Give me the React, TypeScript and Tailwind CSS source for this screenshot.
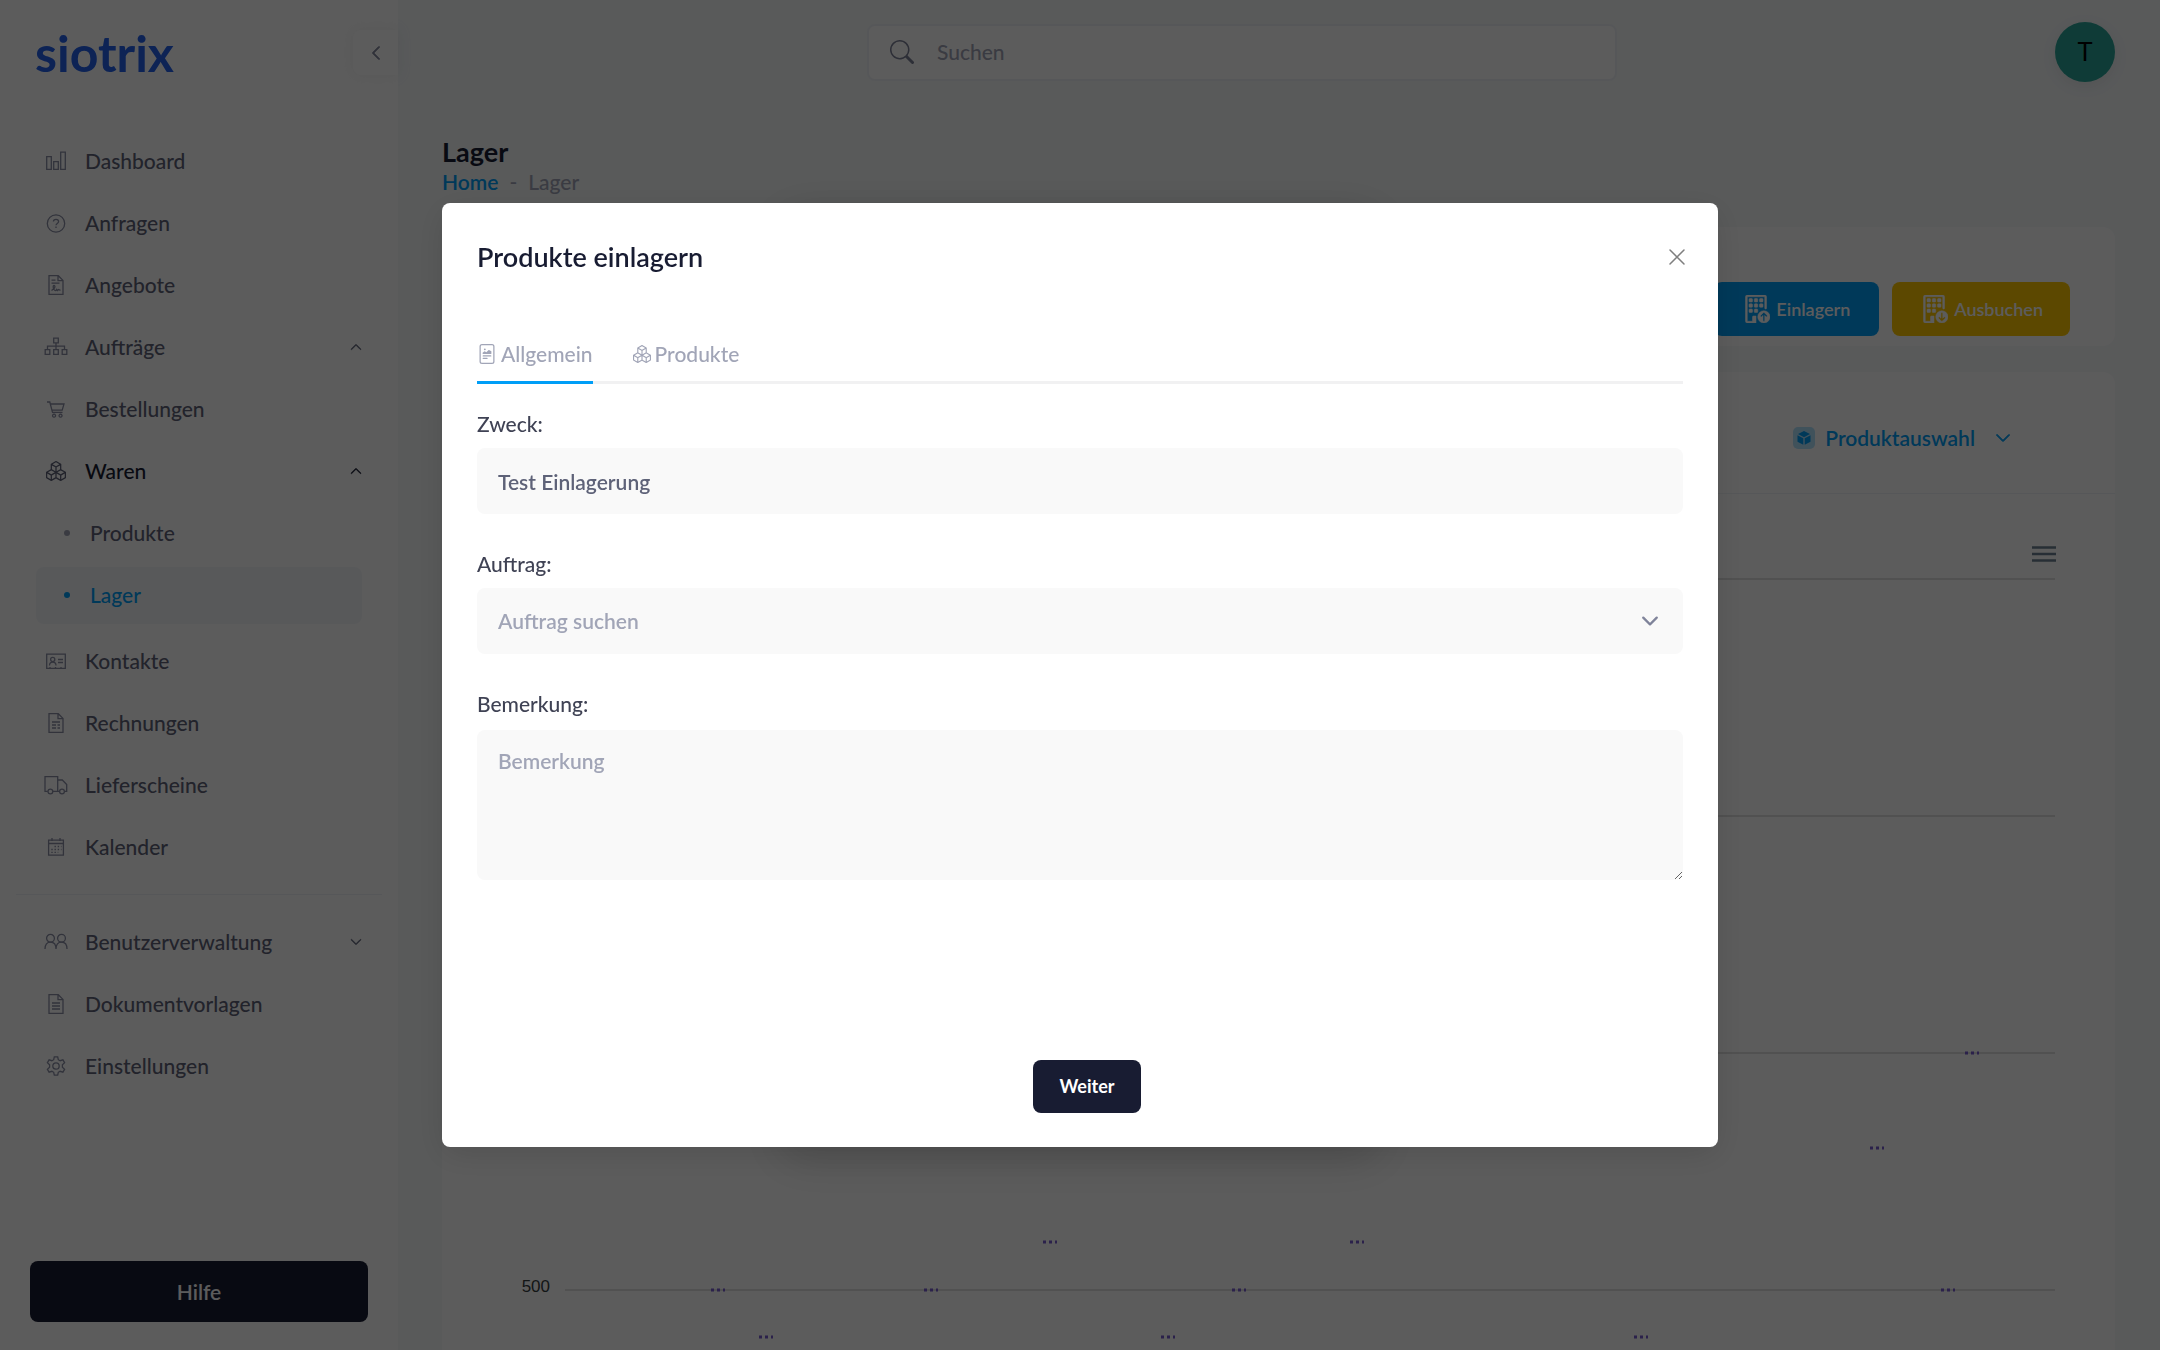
import { useState, type ReactNode } from "react";
import {
  BsBoxes,
  BsBuildingDown,
  BsBuildingUp,
  BsChevronDown,
  BsChevronLeft,
  BsChevronUp,
  BsFileRichtext,
  BsSearch,
} from "react-icons/bs";

function Glyph({ children, className = "w-5" }: { children: ReactNode; className?: string }) {
  return (
    <svg viewBox="0 0 20 20" className={`h-5 ${className}`} fill="none" stroke="currentColor" strokeWidth="1.3" aria-hidden="true">
      {children}
    </svg>
  );
}

const page = <path d="M3 .7h9.3L17 5.4v13.9H3zM12 .7v5h5" />;

const icons = {
  chart: (
    <Glyph>
      <path d="M.7 5.7h4.6v12.6H.7zM7.7 10.7h4.6v7.6H7.7zM14.7 1.2h4.6v17.1h-4.6z" />
    </Glyph>
  ),
  question: (
    <Glyph>
      <circle cx="10" cy="10.5" r="8.7" />
      <path d="M7.4 8.6c0-3 5.2-3 5.2 0 0 1.9-2.6 1.9-2.6 3.7M10 13.5V15" />
    </Glyph>
  ),
  contract: (
    <Glyph>
      {page}
      <path d="M5.5 5.2h4M5.5 8.2h8M5.5 15.5l2-1.5c2-1.5 1.6-3.5.5-3.5s-1 2.5 0 4 2 1.5 2.5 0l1 1 1-1 2 .8" />
    </Glyph>
  ),
  sitemap: (
    <Glyph className="w-6 overflow-visible">
      <path d="M7.7 1.2h4.6v4.6H7.7zM-.8 12.7h4.6v4.6H-.8zM7.7 12.7h4.6v4.6H7.7zM16.2 12.7h4.6v4.6h-4.6zM10 6v6.5M1.5 12.5V9.2h17v3.3" />
    </Glyph>
  ),
  cart: (
    <Glyph>
      <path d="M1 3h2.8l2.7 10.3h10M4.3 5H18l-1.8 6.2H6M8 15.2a1.5 1.5 0 1 0 .1 0zM14.5 15.2a1.5 1.5 0 1 0 .1 0z" />
    </Glyph>
  ),
  boxes: <BsBoxes className="size-5" />,
  card: (
    <Glyph>
      <path d="M.7 3.2h18.6v14.1H.7zM12 8.5h5M12 11.5h5M3.5 14.5c0-4.5 6.5-4.5 6.5 0M4 17v-1M9.5 17v-1M15 17v-1" />
      <circle cx="6.7" cy="8.5" r="2.1" />
    </Glyph>
  ),
  invoice: (
    <Glyph>
      {page}
      <path d="M6 9h8M6 12h4M11.5 12H14M6 15h4M11.5 15H14" />
    </Glyph>
  ),
  truck: (
    <Glyph className="w-6 overflow-visible">
      <path d="M1.8 16.3H-1V1.7h12.7v14.6H7M11.7 5h4.6l4.4 4.6v6.7h-2M13.5 16.3h-1.8" />
      <circle cx="4.4" cy="16.5" r="2.4" />
      <circle cx="16" cy="16.5" r="2.4" />
    </Glyph>
  ),
  calendar: (
    <Glyph>
      <path d="M2.6 3.2h14.8v15H2.6zM2.6 6.5h14.8M6 1v3M14 1v3" />
      <path strokeDasharray="1.4 1.8" d="M8.5 9.5h7M5.3 12.5h10.2M5.3 15.3h7" />
    </Glyph>
  ),
  users: (
    <Glyph className="w-6 overflow-visible">
      <circle cx="4.5" cy="6.3" r="3.9" />
      <circle cx="15.5" cy="6.3" r="3.9" />
      <path d="M-1 17c0-4.500 2-6.8 5.5-6.8S10 12.5 10 17c0-4.5 2-6.8 5.5-6.8S21 12.5 21 17" />
    </Glyph>
  ),
  lines: (
    <Glyph>
      {page}
      <path d="M6 9h8M6 12h8M6 15h8" />
    </Glyph>
  ),
  gear: (
    <Glyph>
      <circle cx="10" cy="10" r="3.2" />
      <path d="M8.3.8h3.4l.6 2.9 1.8 1 2.8-.9 1.7 2.9-2.2 2v2.6l2.2 2-1.7 2.9-2.8-.9-1.8 1-.6 2.9H8.3l-.6-2.9-1.8-1-2.8.9-1.7-2.9 2.2-2V8.7l-2.2-2 1.7-2.9 2.8.9 1.8-1z" />
    </Glyph>
  ),
};

type NavEntry = { label: string; icon: keyof typeof icons; chevron?: "up" | "down"; active?: boolean };

const mainNav: NavEntry[] = [
  { label: "Dashboard", icon: "chart" },
  { label: "Anfragen", icon: "question" },
  { label: "Angebote", icon: "contract" },
  { label: "Aufträge", icon: "sitemap", chevron: "up" },
  { label: "Bestellungen", icon: "cart" },
  { label: "Waren", icon: "boxes", chevron: "up", active: true },
];

const recordNav: NavEntry[] = [
  { label: "Kontakte", icon: "card" },
  { label: "Rechnungen", icon: "invoice" },
  { label: "Lieferscheine", icon: "truck" },
  { label: "Kalender", icon: "calendar" },
];

const adminNav: NavEntry[] = [
  { label: "Benutzerverwaltung", icon: "users", chevron: "down" },
  { label: "Dokumentvorlagen", icon: "lines" },
  { label: "Einstellungen", icon: "gear" },
];

function NavItem({ label, icon, chevron, active }: NavEntry) {
  return (
    <a href="#" className={`flex h-[62px] items-center pr-9 pl-11 ${active ? "text-[#181c32]" : "text-[#5e6278]"}`}>
      <span className={`flex w-6 justify-center ${active ? "text-[#5e6278]" : "text-[#8a8ea5]"}`}>{icons[icon]}</span>
      <span className="ml-[17px] flex-1">{label}</span>
      {chevron === "up" && <BsChevronUp className="size-3 stroke-1" />}
      {chevron === "down" && <BsChevronDown className="size-3 stroke-1" />}
    </a>
  );
}

function SubItem({ label, active }: { label: string; active?: boolean }) {
  return (
    <div className="flex h-[62px] items-center px-9">
      <a
        href="#"
        className={`flex h-[57px] flex-1 items-center rounded-lg pl-7 ${active ? "bg-[#f4f6fa] text-[#009ef7]" : "text-[#5e6278]"}`}
      >
        <span className={`size-[6px] rounded-full ${active ? "bg-[#009ef7]" : "bg-[#a1a5b7]"}`} />
        <span className="ml-5">{label}</span>
      </a>
    </div>
  );
}

function Sidebar() {
  return (
    <aside className="flex w-[398px] shrink-0 flex-col bg-white">
      <div className="flex h-[130px] items-start justify-between pt-[30px]">
        <a href="#" className="pl-[35px] text-[50px] leading-[46px] font-bold text-[#2563eb]">
          siotrix
        </a>
        <button
          aria-label="Menü einklappen"
          className="flex size-[45px] items-center justify-center rounded-l-lg bg-white text-[#7e8299] shadow-[0_0_14px_rgba(160,160,160,0.15)]"
        >
          <BsChevronLeft className="size-4 stroke-1" />
        </button>
      </div>
      <nav className="flex-1">
        {mainNav.map((n) => (
          <NavItem key={n.label} {...n} />
        ))}
        <SubItem label="Produkte" />
        <SubItem label="Lager" active />
        <div className="h-1" />
        {recordNav.map((n) => (
          <NavItem key={n.label} {...n} />
        ))}
        <hr className="mx-4 my-4 border-[#eff2f5]" />
        {adminNav.map((n) => (
          <NavItem key={n.label} {...n} />
        ))}
      </nav>
      <button className="mx-[30px] mb-7 h-[61px] rounded-lg bg-[#181c32] font-semibold text-white">Hilfe</button>
    </aside>
  );
}

// Chart coordinates are relative to the card's content area.
const gridLines = [85, 322, 559, 796];
const markers = [
  [276, 796],
  [324, 843],
  [489, 796],
  [608, 748],
  [726, 843],
  [797, 796],
  [915, 748],
  [1199, 843],
  [1435, 654],
  [1506, 796],
  [1530, 559],
];

function StockChart() {
  return (
    <svg viewBox="0 0 1673 856" className="block w-full">
      <g stroke="#e0e0e0" strokeWidth="2">
        {gridLines.map((y) => (
          <path key={y} d={`M123 ${y}H1613`} />
        ))}
      </g>
      <g stroke="#775dd0" strokeWidth="3" strokeDasharray="3 3">
        {markers.map(([x, y]) => (
          <path key={`${x}-${y}`} d={`M${x - 7} ${y}h14`} />
        ))}
      </g>
      <path d="M1590 53.5h24M1590 60h24M1590 66.5h24" stroke="#6e8192" strokeWidth="2.5" />
      <text x="108" y="798" textAnchor="end" fontSize="17" fill="#373d3f" className="font-['Liberation_Sans',sans-serif] font-normal">
        500
      </text>
    </svg>
  );
}

function Main() {
  return (
    <main className="flex min-w-0 flex-1 flex-col pr-[45px] pl-11">
      <header className="flex h-[104px] shrink-0 items-center justify-between">
        <div className="flex-1" />
        <label className="flex h-[57px] w-[750px] items-center rounded-lg border-2 border-[#eff2f5] bg-white pl-[21px] text-[#7e8299]">
          <BsSearch className="size-6" />
          <input type="search" aria-label="Suchen" placeholder="Suchen" className="ml-[23px] flex-1 outline-none placeholder:text-[#a1a5b7]" />
        </label>
        <div className="flex flex-1 justify-end pl-[73px]">
          <button className="size-[60px] rounded-full bg-[#2aa598] font-['Roboto',sans-serif] text-[26px] font-normal text-black shadow-[0_4px_16px_rgba(0,0,0,0.07)]">
            T
          </button>
        </div>
      </header>

      <div className="flex h-[123px] shrink-0 flex-col pt-8">
        <h1 className="text-[27px] leading-8 font-bold text-[#181c32]">Lager</h1>
        <nav className="flex gap-[11px] leading-7 text-[#a1a5b7]">
          <a href="#" className="font-semibold text-[#009ef7]">
            Home
          </a>
          <span>-</span>
          <span>Lager</span>
        </nav>
      </div>

      <section className="mb-[26px] flex h-[119px] shrink-0 items-end justify-end gap-[13px] rounded-xl bg-white px-[45px] pb-[10px] text-[18px] font-semibold text-white">
        <button className="flex h-[54px] items-center gap-[6px] rounded-lg bg-[#009ef7] pr-[29px] pl-7">
          <BsBuildingUp className="size-7 stroke-[0.3]" />
          Einlagern
        </button>
        <button className="flex h-[54px] items-center gap-[6px] rounded-lg bg-[#ffc700] pr-[27px] pl-7">
          <BsBuildingDown className="size-7 stroke-[0.3]" />
          Ausbuchen
        </button>
      </section>

      <section className="flex-1 rounded-t-xl bg-white">
        <div className="flex h-[122px] items-center justify-end border-b border-[#eff2f5] pt-[10px] pr-[104px] text-[#009ef7]">
          <button className="flex items-center gap-[10px] font-semibold">
            <svg viewBox="0 0 22 22" className="size-[22px]" fill="currentColor" aria-hidden="true">
              <rect width="22" height="22" rx="5" opacity=".3" />
              <path d="M11 4l6 3-6 3.2L5 7zM4.5 8.3l5.8 3v6.5l-5.8-3zM17.5 8.3l-5.8 3v6.5l5.8-3z" />
            </svg>
            <span>Produktauswahl</span>
            <BsChevronDown className="ml-[10px] size-4 stroke-1" />
          </button>
        </div>
        <StockChart />
      </section>
    </main>
  );
}

function ReceiveDialog() {
  const [purpose, setPurpose] = useState("Test Einlagerung");
  const [tab, setTab] = useState("Allgemein");
  const tabs = [
    { label: "Allgemein", icon: <BsFileRichtext className="size-5" /> },
    { label: "Produkte", icon: <BsBoxes className="size-[18px]" /> },
  ];

  return (
    <div className="fixed inset-0 flex items-center justify-center bg-black/64">
      <div className="relative w-full max-w-[1276px]">
        <div className="absolute inset-y-0 left-1/2 w-[600px] -translate-x-1/2 rounded-lg shadow-[0_12px_48px_rgba(0,0,0,0.16)]" />
        <div
          role="dialog"
          aria-labelledby="dialog-title"
          className="relative rounded-lg bg-white px-[35px] pb-[34px] shadow-[0_8px_32px_rgba(0,0,0,0.12)]"
        >
          <div className="flex h-[108px] items-center justify-between">
            <h2 id="dialog-title" className="text-[27px] font-semibold text-[#181c32]">
              Produkte einlagern
            </h2>
            <button aria-label="Schließen" className="-mr-1.5 flex size-6 items-center justify-center text-[#7f7f7f]">
              <svg viewBox="0 0 16 16" className="size-4" fill="none" stroke="currentColor" strokeWidth="1.5" strokeLinecap="round">
                <path d="M1 1l14 14M15 1L1 15" />
              </svg>
            </button>
          </div>

          <div role="tablist" className="mt-4 flex gap-10 border-b-3 border-[#f1f1f2] text-[#a1a5b7]">
            {tabs.map((t) => (
              <button
                key={t.label}
                role="tab"
                aria-selected={tab === t.label}
                onClick={() => setTab(t.label)}
                className={`-mb-[3px] flex h-[57px] items-center gap-1 border-b-3 ${tab === t.label ? "border-[#009ef7]" : "border-transparent"}`}
              >
                {t.icon}
                {t.label}
              </button>
            ))}
          </div>

          <form className="mt-[26px] flex flex-col text-[#3f4254]">
            <label htmlFor="purpose" className="mb-[10px] leading-7">
              Zweck:
            </label>
            <input
              id="purpose"
              value={purpose}
              onChange={(e) => setPurpose(e.target.value)}
              className="h-[66px] rounded-lg bg-[#f9f9f9] px-[21px] font-semibold text-[#5e6278] outline-none"
            />
            <label htmlFor="order" className="mt-9 mb-[10px] leading-7">
              Auftrag:
            </label>
            <div className="relative">
              <select
                id="order"
                className="h-[66px] w-full appearance-none rounded-lg bg-[#f9f9f9] px-[21px] font-semibold text-[#a1a5b7] outline-none"
              >
                <option>Auftrag suchen</option>
              </select>
              <BsChevronDown className="pointer-events-none absolute top-6 right-6 size-[18px] stroke-1 text-[#7e8299]" />
            </div>
            <label htmlFor="note" className="mt-9 mb-3 leading-7">
              Bemerkung:
            </label>
            <textarea
              id="note"
              placeholder="Bemerkung"
              className="h-[150px] rounded-lg bg-[#f9f9f9] px-[21px] py-4 leading-[30px] font-semibold outline-none placeholder:text-[#a1a5b7]"
            />
            <div className="mt-[180px] flex justify-center pl-[14px]">
              <button type="button" className="h-[53px] rounded-lg bg-[#181c32] px-[27px] text-[18px] font-bold text-white">
                Weiter
              </button>
            </div>
          </form>
        </div>
      </div>
    </div>
  );
}

export default function App() {
  return (
    <div className="flex h-screen overflow-hidden bg-[#f5f8fa] font-['Lato','Liberation_Sans',sans-serif] text-[21px] font-medium">
      <Sidebar />
      <Main />
      <ReceiveDialog />
    </div>
  );
}
